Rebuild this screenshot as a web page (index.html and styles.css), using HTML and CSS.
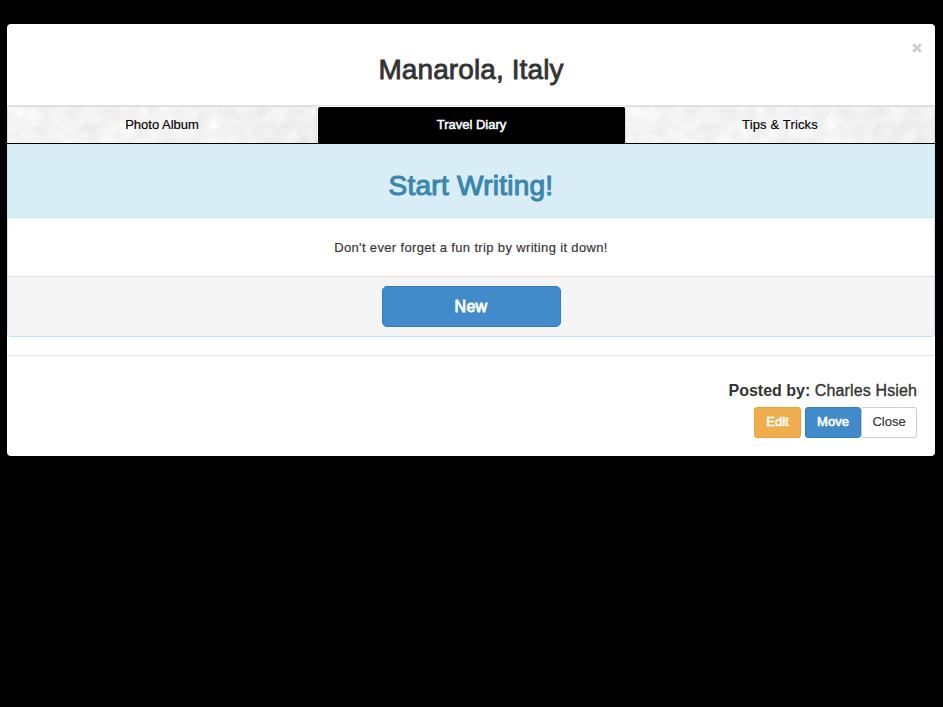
FILE: index.html
```html
<!DOCTYPE html>
<html lang="en">
<head>
<meta charset="utf-8">
<title>Manarola, Italy</title>
<link rel="stylesheet" href="styles.css">
</head>
<body>
<svg class="defs" width="0" height="0" aria-hidden="true">
  <filter id="marble" x="0" y="0" width="100%" height="100%" color-interpolation-filters="sRGB">
    <feTurbulence type="fractalNoise" baseFrequency="0.065" numOctaves="5" seed="8"/>
    <feColorMatrix values="0.1 0 0 0 0.905  0.1 0 0 0 0.905  0.1 0 0 0 0.905  0 0 0 0 1"/>
  </filter>
</svg>
<main class="modal">
  <header class="modal-header">
    <h1 class="title">Manarola, Italy</h1>
    <button class="dismiss" aria-label="Dismiss"><svg width="10" height="10" viewBox="0 0 10 10"><path d="M1.2 1.2 8.8 8.8M8.8 1.2 1.2 8.8"/></svg></button>
  </header>
  <nav class="tabs">
    <a class="tab"><svg class="texture" width="100%" height="100%"><rect width="100%" height="100%" filter="url(#marble)"/></svg><span class="label album">Photo Album</span></a>
    <a class="tab active"><span class="label diary">Travel Diary</span></a>
    <a class="tab"><svg class="texture" width="100%" height="100%"><rect width="100%" height="100%" filter="url(#marble)"/></svg><span class="label tips">Tips &amp; Tricks</span></a>
  </nav>
  <section class="panel">
    <div class="panel-heading"><h2 class="heading">Start Writing!</h2></div>
    <div class="panel-body"><span class="copy">Don't ever forget a fun trip by writing it down!</span></div>
    <div class="panel-footer"><button class="new">New</button></div>
  </section>
  <footer class="modal-footer">
    <p class="posted"><b>Posted by:</b> <span class="author">Charles Hsieh</span></p>
    <div class="actions">
      <button class="btn edit">Edit</button>
      <button class="btn move">Move</button>
      <button class="btn close">Close</button>
    </div>
  </footer>
</main>
</body>
</html>
```
FILE: styles.css
```css
* { box-sizing: border-box; }
body {
  margin: 0;
  padding: 24px 8px 0 7px;
  background: #000;
  color: #333;
  font: 13px/18px "Liberation Sans", Arial, sans-serif;
}
h1, h2, p { margin: 0; }
button { font-family: inherit; padding: 0; }
.defs { position: absolute; }
.modal {
  height: 432px;
  background: #fff;
  border-radius: 4px;
  overflow: hidden;
}
.modal-header {
  position: relative;
  height: 82px;
  padding-top: 30px;
  border-bottom: 1px solid #e2e2e2;
  text-align: center;
}
.title, .heading {
  font-size: 28px;
  line-height: 32px;
  font-weight: 400;
  -webkit-text-stroke: 0.8px currentColor;
}
.title { letter-spacing: 0.1px; }
.heading { letter-spacing: 0.25px; -webkit-text-stroke-width: 1.1px; }
.dismiss {
  position: absolute;
  top: 19px;
  right: 13px;
  width: 10px;
  height: 10px;
  border: 0;
  background: none;
}
.dismiss svg { display: block; fill: none; stroke: #ccc; stroke-width: 2.7; }
.tabs {
  display: grid;
  grid-template-columns: 310px 308px 310px;
  height: 38px;
  border-bottom: 1px solid #000;
}
.tab {
  position: relative;
  display: flex;
  justify-content: center;
  padding-top: 10px;
  color: #000;
  border: 1px solid #ddd;
  border-bottom: 0;
  border-radius: 3px 3px 0 0;
  overflow: hidden;
}
.texture { position: absolute; inset: 0; }
.tab:not(.active)::before {
  content: "";
  position: absolute;
  inset: 0;
  z-index: 1;
  background: linear-gradient(90deg, transparent 65%, rgba(0, 0, 0, 0.025));
}
.label { position: relative; z-index: 2; line-height: 16px; -webkit-text-stroke: 0.15px currentColor; }
.tab.active {
  margin: 1px 0 0 1px;
  padding-top: 9px;
  background: #000;
  border-color: #000;
  border-radius: 2px 2px 0 0;
  color: #fff;
}
.diary { -webkit-text-stroke: 0.5px #fff; }
.tips { letter-spacing: 0.15px; }
.panel {
  height: 193px;
  border: 1px solid #bce8f1;
  border-top: 0;
  border-radius: 0 0 4px 4px;
  overflow: hidden;
  text-align: center;
}
.panel-heading {
  height: 74px;
  padding-top: 26px;
  background: #d9edf7;
  border-bottom: 1px solid #bce8f1;
  color: #3a87ad;
}
.panel-body { height: 58px; padding-top: 21px; }
.copy { letter-spacing: 0.35px; -webkit-text-stroke: 0.15px currentColor; }
.panel-footer {
  height: 60px;
  padding-top: 9px;
  background: #f5f5f5;
  border-top: 1px solid #ddd;
}
.new {
  width: 179px;
  height: 41px;
  border: 1px solid #357ebd;
  border-radius: 5px;
  background: #428bca;
  color: #fff;
  font-size: 16px;
  letter-spacing: 0.3px;
  -webkit-text-stroke: 0.8px #fff;
}
.modal-footer {
  margin-top: 18px;
  padding: 26px 18px 0;
  border-top: 1px solid #e5e5e5;
  text-align: right;
}
.posted { font-size: 16px; line-height: 18px; -webkit-text-stroke: 0.35px #333; }
.posted b { -webkit-text-stroke: 0; }
.author { letter-spacing: 0.15px; margin-right: -0.15px; }
.actions { display: flex; justify-content: flex-end; margin-top: 7px; }
.btn {
  height: 31px;
  border: 1px solid;
  border-radius: 3px;
  color: #fff;
  font-size: 13px;
  padding-bottom: 3px;
}
.edit { width: 47px; margin-right: 4px; background: #f0ad4e; border-color: #eea236; -webkit-text-stroke: 0.6px #fff; }
.move { width: 56px; background: #428bca; border-color: #357ebd; -webkit-text-stroke: 0.6px #fff; }
.close { width: 56px; background: #fff; border-color: #ccc; color: #333; -webkit-text-stroke: 0.15px #333; }
```
